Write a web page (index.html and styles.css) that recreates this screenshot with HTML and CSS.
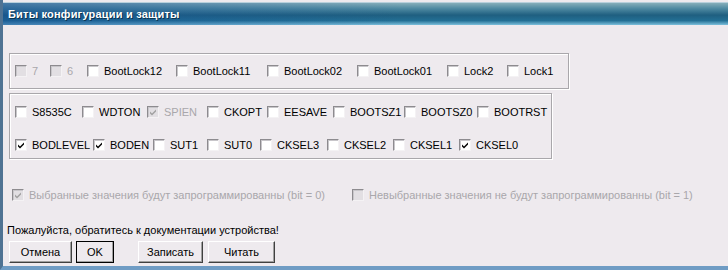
FILE: index.html
```html
<!DOCTYPE html>
<html lang="ru">
<head>
  <meta charset="UTF-8">
  <title>Биты конфигурации и защиты</title>
  <link rel="stylesheet" href="styles.css">
</head>
<body>

<div class="window">
  <div class="titlebar">Биты конфигурации и защиты</div>

  <div class="content">
    <div class="group lock-group">
      <label class="bit off"><input type="checkbox" disabled>7</label>
      <label class="bit off"><input type="checkbox" disabled>6</label>
      <label class="bit"><input type="checkbox">BootLock12</label>
      <label class="bit"><input type="checkbox">BootLock11</label>
      <label class="bit"><input type="checkbox">BootLock02</label>
      <label class="bit"><input type="checkbox">BootLock01</label>
      <label class="bit"><input type="checkbox">Lock2</label>
      <label class="bit"><input type="checkbox">Lock1</label>
    </div>

    <div class="group fuse-group">
      <div class="fuse-row row-high">
        <label class="bit"><input type="checkbox">S8535C</label>
        <label class="bit"><input type="checkbox">WDTON</label>
        <label class="bit off"><input type="checkbox" checked disabled>SPIEN</label>
        <label class="bit"><input type="checkbox">CKOPT</label>
        <label class="bit"><input type="checkbox">EESAVE</label>
        <label class="bit"><input type="checkbox">BOOTSZ1</label>
        <label class="bit"><input type="checkbox">BOOTSZ0</label>
        <label class="bit"><input type="checkbox">BOOTRST</label>
      </div>
      <div class="fuse-row row-low">
        <label class="bit"><input type="checkbox" checked>BODLEVEL</label>
        <label class="bit"><input type="checkbox" checked>BODEN</label>
        <label class="bit"><input type="checkbox">SUT1</label>
        <label class="bit"><input type="checkbox">SUT0</label>
        <label class="bit"><input type="checkbox">CKSEL3</label>
        <label class="bit"><input type="checkbox">CKSEL2</label>
        <label class="bit"><input type="checkbox">CKSEL1</label>
        <label class="bit"><input type="checkbox" checked>CKSEL0</label>
      </div>
    </div>

    <div class="legend">
      <label class="bit off legend-on"><input type="checkbox" checked disabled>Выбранные значения будут запрограммированны (bit = 0)</label>
      <label class="bit off"><input type="checkbox" disabled>Невыбранные значения не будут запрограммированны (bit = 1)</label>
    </div>

    <div class="note">Пожалуйста, обратитесь к документации устройства!</div>

    <div class="buttons">
      <button class="btn btn-cancel">Отмена</button>
      <button class="btn btn-ok">OK</button>
      <button class="btn btn-write">Записать</button>
      <button class="btn btn-read">Читать</button>
    </div>
  </div>
</div>

</body>
</html>
```

FILE: styles.css
```css
body {
  margin: 0;
  font-family: "Liberation Sans", Arial, sans-serif;
  font-size: 11px;
  color: #000;
  background: #eeeaee;
}

.window {
  width: 728px;
  height: 270px;
  box-sizing: border-box;
  border-left: 3px solid #4f7393;
  border-bottom: 4px solid #6f9cc4;
  background: #eeeaee;
  overflow: hidden;
}

.titlebar {
  height: 22px;
  margin-top: 2px;
  padding-left: 5px;
  line-height: 22px;
  font-weight: bold;
  font-size: 11px;
  letter-spacing: 0.2px;
  color: #fff;
  text-shadow: 1px 1px 0 #0c3450;
  border-top: 1px solid #b8d0dc;
  background:
    linear-gradient(to right, rgba(20, 80, 150, 0.55), rgba(20, 80, 150, 0) 55%),
    linear-gradient(to bottom, #86aeba 0, #4f8aa2 25%, #1f5f80 55%, #236f94 80%, #7cc0dc 100%);
}

.content {
  padding-left: 6px;
}

.group {
  border: 1px solid #a9a7ab;
  box-shadow: inset 1px 1px 0 #fff, 1px 1px 0 #fff;
  box-sizing: border-box;
}

.lock-group {
  width: 560px;
  height: 36px;
  margin-top: 28px;
  padding-left: 5px;
  display: grid;
  grid-template-columns: 35px 37px 89px 91px 90px 90px 60px auto;
  align-items: center;
}

.fuse-group {
  width: 543px;
  height: 66px;
  margin-top: 4px;
  padding: 1px 0 0 5px;
}

.fuse-row {
  height: 33px;
  display: grid;
  align-items: center;
}

.row-high {
  grid-template-columns: 67px 65px 60px 60px 66px 71px 73px auto;
}

.row-low {
  grid-template-columns: 78px 60px 54px 53px 67px 66px 66px auto;
}

.bit {
  display: flex;
  align-items: center;
  white-space: nowrap;
}

.bit input {
  appearance: none;
  -webkit-appearance: none;
  width: 12px;
  height: 12px;
  margin: 0 5px 0 0;
  box-sizing: border-box;
  border: 1px solid;
  border-color: #8d8b8f #f4f2f4 #f4f2f4 #8d8b8f;
  box-shadow: inset 1px 1px 0 #c8c6ca;
  background: #fff no-repeat center;
  flex: none;
}

.bit input:checked {
  background-image: url("data:image/svg+xml,%3Csvg xmlns='http://www.w3.org/2000/svg' width='10' height='10'%3E%3Cpath d='M2 4.5l2 2 4-4v2l-4 4-2-2z' fill='%23000'/%3E%3C/svg%3E");
}

.bit.off {
  color: #a9a7ab;
}

.bit.off input {
  background-color: #e2dfe3;
}

.bit.off input:checked {
  background-image: url("data:image/svg+xml,%3Csvg xmlns='http://www.w3.org/2000/svg' width='10' height='10'%3E%3Cpath d='M2 4.5l2 2 4-4v2l-4 4-2-2z' fill='%23a0a0a0'/%3E%3C/svg%3E");
}

.legend {
  display: flex;
  height: 18px;
  margin-top: 27px;
  padding-left: 3px;
  align-items: center;
}

.legend-on {
  width: 340px;
}

.note {
  margin-top: 20px;
  height: 12px;
  line-height: 12px;
  margin-left: -2px;
}

.buttons {
  display: flex;
  margin-top: 5px;
}

.btn {
  height: 22px;
  padding: 0;
  font-family: inherit;
  font-size: 11px;
  color: #000;
  background: #eeeaee;
  border: 1px solid;
  border-color: #fff #404040 #404040 #fff;
  box-shadow: inset -1px -1px 0 #a0a0a0;
}

.btn-cancel {
  width: 63px;
}

.btn-ok {
  width: 38px;
  margin-left: 4px;
  outline: 1px solid #000;
  outline-offset: -1px;
}

.btn-write {
  width: 65px;
  margin-left: 24px;
}

.btn-read {
  width: 67px;
  margin-left: 5px;
}
```
